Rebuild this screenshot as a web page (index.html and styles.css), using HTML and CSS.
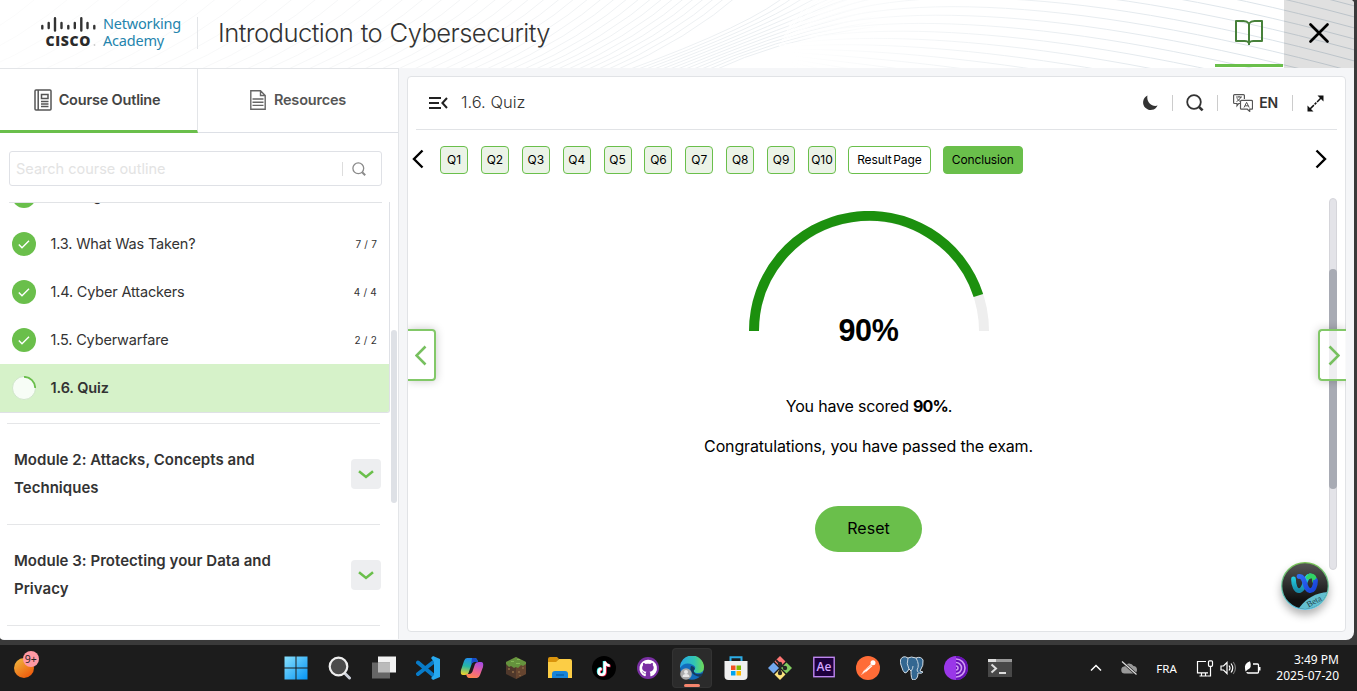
FILE: index.html
```html
<!DOCTYPE html>
<html lang="en">
<head>
<meta charset="utf-8">
<title>Introduction to Cybersecurity</title>
<link rel="stylesheet" href="styles.css">
</head>
<body>
<div class="window">
  <header class="header">
    <svg class="waves" width="1354" height="68" viewBox="0 0 1354 68">
      <defs>
        <linearGradient id="fadeA" gradientUnits="userSpaceOnUse" x1="0" y1="0" x2="880" y2="0"><stop offset="0" stop-color="#fbfbfb"/><stop offset=".5" stop-color="#f4f5f6"/><stop offset=".88" stop-color="#eaeef1"/><stop offset="1" stop-color="#fff"/></linearGradient>
        <linearGradient id="fadeB" gradientUnits="userSpaceOnUse" x1="790" y1="0" x2="1354" y2="0"><stop offset="0" stop-color="#fff"/><stop offset=".3" stop-color="#f0f3f5"/><stop offset="1" stop-color="#d5dee5"/></linearGradient>
      </defs>
      <g id="waveA" fill="none" stroke="url(#fadeA)"></g>
      <g id="waveB" fill="none" stroke="url(#fadeB)"></g>
    </svg>
    <div class="brand">
      <svg class="cisco" width="58" height="34" viewBox="40 15 58 34">
        <g stroke="#333" stroke-width="2.400" stroke-linecap="round"><path d="M42.300 26v2.400M48.700 23v5M55 18.300v12.200M61.500 23v5M68.300 26v2.400M74.800 23v5M81.300 18.300v12.200M87.500 23v5M94.300 26v2.400"/></g>
        <text x="45.5" y="46" textLength="45" class="cisco-word">CISCO</text>
        <circle cx="94.500" cy="45" r=".9" fill="#ccc"/>
      </svg>
      <div class="academy"><div>Networking</div><div>Academy</div></div>
    </div>
    <h1 class="course">Introduction to Cybersecurity</h1>
    <div class="head-book">
      <svg width="30" height="28" viewBox="0 0 30 28" fill="none" stroke="#47813a" stroke-width="2" stroke-linejoin="round"><path d="M15 4.500Q13 2 9.500 2H2v20h8.500Q14 22 15 24Q16 22 19.500 22H28V2H20.500Q17 2 15 4.500V26"/></svg>
    </div>
    <div class="head-close"><svg width="22" height="22" viewBox="0 0 22 22" stroke="#000" stroke-width="2.700" stroke-linecap="round"><path d="M2.500 2.500l17 17M19.500 2.500l-17 17"/></svg></div>
  </header>

  <div class="body">
    <aside class="sidebar">
      <nav class="tabs">
        <div class="tab tab-on">
          <svg width="18" height="22" viewBox="0 0 18 22" fill="none" stroke="#555" stroke-width="1.500"><rect x="1" y="1" width="16" height="20" rx="1"/><path d="M4.200 1v20M7.500 5.500h6.500v4h-6.500zM7 12.500h7.500M7 15h7.500M7 17.500h7.500"/></svg>
          <span>Course Outline</span>
        </div>
        <div class="tab">
          <svg width="16" height="20" viewBox="0 0 16 20" fill="none" stroke="#666" stroke-width="1.400"><path d="M.8.8h9.700l4.700 4.700v13.700H.8zM10.500.8v4.700h4.700M2.500 9h11M2.500 12.200h11M2.500 15.400h11"/></svg>
          <span>Resources</span>
        </div>
      </nav>
      <div class="search">
        <span class="ph">Search course outline</span>
        <i></i>
        <svg width="14" height="14" viewBox="0 0 14 14" fill="none" stroke="#8a8a8a" stroke-width="1.300"><circle cx="6.300" cy="6.300" r="5.400"/><path d="M10.200 10.200l3 3" stroke-width="2"/></svg>
      </div>
      <div class="outline">
        <div class="lessons">
          <div class="lesson cut"><b class="tick"></b><span>1.2. Organizational Data</span></div>
          <div class="lesson"><b class="tick"><svg width="12" height="9" viewBox="0 0 12 9"><path d="M.8 4.500l3.200 3.300L11 .8"/></svg></b><span>1.3. What Was Taken?</span><em>7 / 7</em></div>
          <div class="lesson"><b class="tick"><svg width="12" height="9" viewBox="0 0 12 9"><path d="M.8 4.500l3.200 3.300L11 .8"/></svg></b><span>1.4. Cyber Attackers</span><em>4 / 4</em></div>
          <div class="lesson"><b class="tick"><svg width="12" height="9" viewBox="0 0 12 9"><path d="M.8 4.500l3.200 3.300L11 .8"/></svg></b><span>1.5. Cyberwarfare</span><em>2 / 2</em></div>
          <div class="lesson current">
            <svg width="24" height="24" viewBox="0 0 24 24"><circle cx="12" cy="12" r="11.500" fill="#f7fdf6" stroke="#c9dfc4" stroke-width=".8"/><path d="M12 .8A11.200 11.200 0 0 1 23.200 12" fill="none" stroke="#6abf4b" stroke-width="1.700"/></svg>
            <span>1.6. Quiz</span>
          </div>
        </div>
        <div class="module"><span>Module 2: Attacks, Concepts and Techniques</span><b class="drop"><svg width="16" height="9" viewBox="0 0 16 9"><path d="M1 1.200L8 7l7-5.800"/></svg></b></div>
        <div class="module"><span>Module 3: Protecting your Data and Privacy</span><b class="drop"><svg width="16" height="9" viewBox="0 0 16 9"><path d="M1 1.200L8 7l7-5.800"/></svg></b></div>
        <div class="module last"></div>
        <div class="side-thumb"></div>
      </div>
    </aside>

    <main class="card">
      <div class="toolbar">
        <svg width="19" height="14" viewBox="0 0 19 14" fill="none" stroke="#222" stroke-width="2"><path d="M0 2h12M0 7h10M0 12h12M18 2l-4.600 5L18 12"/></svg>
        <span class="title">1.6. Quiz</span>
        <svg class="moon" width="16" height="16" viewBox="0 0 16 16"><path d="M5.500.5A7.600 7.600 0 1 0 15.600 10.600C10 12.500 4 7 5.500.5z" fill="#333"/></svg>
        <i></i>
        <svg class="find" width="18" height="18" viewBox="0 0 18 18" fill="none" stroke="#333" stroke-width="1.800"><circle cx="8" cy="8" r="6.800"/><path d="M12.800 12.800l3.800 3.600" stroke-width="2.600"/></svg>
        <i></i>
        <svg class="lang-icon" width="20" height="18" viewBox="0 0 20 18" fill="none" stroke="#555" stroke-width="1.200"><path d="M7 9.500H5.800L4 11.800V9.500H1.500Q.6 9.500.6 8.500V1.600Q.6.6 1.600.6h8.800q1 0 1 1V5M8.500 6.400h10q1 0 1 1v6.800q0 1-1 1h-1.800v2.200l-2.400-2.200H8.500q-1 0-1-1V7.400q0-1 1-1z"/><path d="M3 3h6M6 2v1M7.800 3Q7 6 3.500 7.600M4 4.200q1 2 3 3.200M11 13.500l2.600-5.200 2.600 5.200M12 11.800h3.200" stroke-width="1"/></svg>
        <strong>EN</strong>
        <i></i>
        <svg class="expand" width="17" height="17" viewBox="0 0 17 17"><path d="M3 14L14 3" stroke="#111" stroke-width="1.500" stroke-dasharray="5.500 1 2.500 1"/><path d="M10.500.5h6V6.500zM.5 10.500v6H6.500z" fill="#111"/></svg>
      </div>
      <div class="pager">
        <svg width="12" height="20" viewBox="0 0 12 20"><path d="M10.500 1.500L2 10l8.500 8.500"/></svg>
        <div class="steps">
          <a>Q1</a><a>Q2</a><a>Q3</a><a>Q4</a><a>Q5</a><a>Q6</a><a>Q7</a><a>Q8</a><a>Q9</a><a>Q10</a><a class="result">Result Page</a><a class="end">Conclusion</a>
        </div>
        <svg width="12" height="20" viewBox="0 0 12 20"><path d="M1.500 1.500L10 10l-8.500 8.500"/></svg>
      </div>
      <section class="score">
        <svg width="240" height="120" viewBox="0 0 240 120" fill="none" stroke-width="10"><path d="M5 120A115 115 0 0 1 235 120" stroke="#eee"/><path d="M5 120A115 115 0 0 1 229.400 84.460" stroke="#1c900e"/></svg>
        <div class="percent">90%</div>
        <p>You have scored <b>90%</b>.</p>
        <p>Congratulations, you have passed the exam.</p>
        <div class="reset">Reset</div>
      </section>
      <div class="track"><div class="thumb"></div></div>
      <div class="side prev"><svg width="12" height="21" viewBox="0 0 12 21"><path d="M10.500 1.500l-9 9 9 9"/></svg></div>
      <div class="side next"><svg width="12" height="21" viewBox="0 0 12 21"><path d="M1.500 1.500l9 9-9 9"/></svg></div>
      <div class="assistant">
        <svg width="48" height="48" viewBox="0 0 48 48">
          <defs>
            <linearGradient id="rim" x1="0" y1="0" x2="0" y2="1"><stop offset="0" stop-color="#77c34f"/><stop offset="1" stop-color="#58bce0"/></linearGradient>
            <linearGradient id="core" x1="0" y1="0" x2="0" y2="1"><stop offset="0" stop-color="#555"/><stop offset=".8" stop-color="#111"/></linearGradient>
            <linearGradient id="cy" x1="0" y1="0" x2="0" y2="1"><stop offset="0" stop-color="#25d6e8"/><stop offset="1" stop-color="#178aa8"/></linearGradient>
            <linearGradient id="bg" x1="0" y1="0" x2="1" y2="1"><stop offset="0" stop-color="#2f6af5"/><stop offset="1" stop-color="#1742d8"/></linearGradient>
            <clipPath id="disc"><circle cx="24" cy="24" r="23"/></clipPath>
          </defs>
          <circle cx="24" cy="24" r="24" fill="url(#rim)"/><circle cx="24" cy="24" r="22.700" fill="url(#core)"/>
          <path d="M18 46Q29 31 48 30V48H18z" fill="#63bfd0" clip-path="url(#disc)"/>
          <g fill="none" stroke-width="4.800" stroke-linecap="round"><path d="M12.500 17c0 7 2.500 12.500 6.500 11.500 6-2 4-14 10-14.500" stroke="url(#cy)"/><path d="M29 14q5-.5 4.500 5" stroke="#31d366"/><path d="M18 14.500c7-1 4.500 12.500 10.500 14 4 .5 6-4 6-10" stroke="url(#bg)"/><path d="M27 15.500q4-3.500 6 .5" stroke="#31d366" stroke-width="4"/></g>
          <text x="27.500" y="45.500" class="beta" transform="rotate(-28 27.500 45.500)">Beta</text>
        </svg>
      </div>
    </main>
  </div>
</div>

<footer class="taskbar">
  <div class="widget"><svg width="28" height="30" viewBox="0 0 28 30"><defs><linearGradient id="or" x1="0" y1="0" x2=".7" y2="1"><stop offset="0" stop-color="#efbd42"/><stop offset="1" stop-color="#ee5a0c"/></linearGradient></defs><circle cx="11" cy="18" r="10" fill="url(#or)"/><circle cx="18" cy="9" r="8" fill="#ff99a4"/><text x="11.700" y="12.800" class="count">9+</text></svg></div>
  <div class="apps">
    <div class="app"><svg viewBox="0 0 24 24"><defs><linearGradient id="win" x1="0" y1="0" x2="1" y2="1"><stop offset="0" stop-color="#88e0fd"/><stop offset="1" stop-color="#0594f5"/></linearGradient></defs><path d="M.5.500h11v11H.5zM12.500.500h11v11h-11zM.5 12.500h11v11H.5zM12.500 12.500h11v11h-11z" fill="url(#win)"/></svg></div>
    <div class="app"><svg viewBox="0 0 24 24"><path d="M16.500 17l5 5" stroke="#ccd0da" stroke-width="3" stroke-linecap="round"/><circle cx="10.500" cy="10.500" r="8.800" fill="#4b4b4b" stroke="#eee" stroke-width="2.200"/></svg></div>
    <div class="app"><svg viewBox="0 0 24 24"><path d="M6 .5h18v16H6z" fill="#f2f2f2"/><path d="M0 6.500h18v16H0z" fill="#666"/><path d="M6 6.500h12v10H6z" fill="#bbb"/></svg></div>
    <div class="app"><svg viewBox="0 0 24 24"><path d="M17.500 6L2 18M2 6.500l15.500 13" stroke="#087bc8" stroke-width="4" stroke-linecap="round"/><path d="M17 0l7 3v18l-7 3-2-2 3-3V6l-3-4z" fill="#27a8ee"/></svg></div>
    <div class="app"><svg viewBox="0 0 24 24"><defs><linearGradient id="ca" x1=".5" y1="0" x2=".3" y2="1"><stop stop-color="#228cf0"/><stop offset=".5" stop-color="#26b7a3"/><stop offset="1" stop-color="#eed32c"/></linearGradient><linearGradient id="cb" x1=".8" y1="0" x2=".4" y2="1"><stop stop-color="#a34ae8"/><stop offset=".6" stop-color="#f1658e"/><stop offset="1" stop-color="#ff8350"/></linearGradient></defs><path d="M7 2h8q2 0 3 4h-4q-2 0-3 4L8.500 17Q8 19 5 19H3q-3 0-2-5L4 5Q5 2 7 2z" fill="url(#ca)"/><path d="M12 2h3q2 0 3 4h-4q-2 0-3 3z" fill="#174cc9"/><path d="M17 22H9q-2 0-3-4h3q3 0 4-4l2-6q1-2 4-2h2q3 0 2 5l-3 8q-1 3-3 3z" fill="url(#cb)"/></svg></div>
    <div class="app"><svg viewBox="0 0 24 24"><path d="M2 6l10-5 10 5v12l-10 5L2 18z" fill="#4f382b"/><path d="M12 11l10-5v12l-10 5z" fill="#65442f"/><path d="M12 1l10 5v2l-3 2-2-1-3 3-2-1-2 1-3-2-2 1-3-3V6z" fill="#65933d"/><path d="M4 12h2v2H4zM8 15h2v2H8zM14 15h2v2h-2zM18 11h2v2h-2zM15 19h2v1h-2z" fill="#80603f"/><path d="M7 5h3v1H7zM13 3h3v1h-3zM12 7h4v1h-4z" fill="#83b955"/></svg></div>
    <div class="app"><svg viewBox="0 0 24 24"><path d="M0 3q0-2 2-2h7l2 2-3 4H0z" fill="#d9930c"/><path d="M0 6h8l3-3h11q2 0 2 2v17H0z" fill="#fccd45"/><path d="M4 22v-4q0-3 3-3h10q3 0 3 3v4z" fill="#1683d8"/><path d="M8 19h8" stroke="#0962aa" stroke-width="1.500"/></svg></div>
    <div class="app"><svg viewBox="0 0 24 24"><circle cx="12" cy="12" r="12" fill="#000"/><g fill="none" stroke-width="2.500"><path d="M12 5v10.500a3 3 0 1 1-3-3.200M12 5q1 4 5 4" stroke="#25f4ee"/><path d="M13.500 6v10.500a3 3 0 1 1-3-3.200M13.500 6q1 4 5 4" stroke="#fe2c55"/><path d="M12.700 5.500V16a3 3 0 1 1-3-3.200M12.700 5.500q1 4 5 4" stroke="#fff"/></g></svg></div>
    <div class="app"><svg viewBox="0 0 24 24"><circle cx="12" cy="12" r="11" fill="#7a2fa3"/><path d="M12 3.800a8.500 8.500 0 0 0-3.200 16.400c.7.100 1-.2 1-.6v-2c-2.400.5-3-1-3-1-1-2 0-1.200.8-.1.700 1.200 2 .8 2.300.6 0-.7.300-1 .6-1.300-5-.5-5-5-3.400-6.600-.2-.6-.2-1.500.1-2.300 1 0 2 .6 2.600 1 1.400-.3 2.900-.3 4.300 0 .7-.5 1.700-1 2.600-1 .3.800.3 1.700.1 2.300 1.700 2 1.300 6-3.300 6.600.5.400.8 1.200.8 2v2c0 .4.300.7 1 .5A8.500 8.500 0 0 0 12 3.800z" fill="#fff"/></svg></div>
    <div class="app active"><svg viewBox="0 0 24 24"><defs><linearGradient id="eg"><stop stop-color="#25a5e8"/><stop offset=".6" stop-color="#32c5b2"/><stop offset="1" stop-color="#70db55"/></linearGradient></defs><circle cx="12" cy="12" r="11.800" fill="#126cbd"/><path d="M0 12A12 12 0 0 1 24 11q0 6-6 6-5 0-4-3 3-3-1-5Q5 5 0 12z" fill="url(#eg)"/><path d="M11 10q-3 8 9 11 2-1 3-4-7 3-9-1-1-2 1-3-1-3-4-3z" fill="#15395f"/><circle cx="6" cy="18" r="5.800" fill="#aaa"/><circle cx="6" cy="16" r="2" fill="#e8e8e8"/><path d="M2.500 21q0-3 3.500-3t3.500 3z" fill="#e8e8e8"/></svg></div>
    <div class="app"><svg viewBox="0 0 24 24"><path d="M6.500 7V1.200h11V7" fill="none" stroke="#2cace5" stroke-width="2"/><path d="M.5 5h23v15q0 4-4 4h-15q-4 0-4-4z" fill="#f0f0f0"/><path d="M7 9.500h4.500V14H7z" fill="#f25022"/><path d="M12.500 9.500H17V14h-4.500z" fill="#7fba00"/><path d="M7 15h4.500v4.500H7z" fill="#00a4ef"/><path d="M12.500 15H17v4.500h-4.500z" fill="#ffb900"/></svg></div>
    <div class="app"><svg viewBox="0 0 24 24"><path d="M12 0l5.500 5.500L12 11 6.500 5.500z" fill="#ff7674"/><path d="M18.500 6.500L24 12l-5.500 5.500L13 12z" fill="#82cc60"/><path d="M12 13l5.500 5.500L12 24l-5.500-5.500z" fill="#fbe27d"/><path d="M5.500 6.500L11 12l-5.500 5.500L0 12z" fill="#72a7ee"/><path d="M8 4l4 4v9M12 8l5 4" fill="none" stroke="#252525" stroke-width="1.800"/><g fill="#252525"><circle cx="12" cy="8" r="2.200"/><circle cx="17" cy="12" r="2.200"/><circle cx="12" cy="17" r="2.200"/></g></svg></div>
    <div class="app"><svg viewBox="0 0 24 24"><rect x="1.800" y="1.300" width="20.400" height="19.400" fill="#1e003d" stroke="#be86f0" stroke-width="1.400"/><text x="4.500" y="15" textLength="15" class="ae">Ae</text></svg></div>
    <div class="app"><svg viewBox="0 0 24 24"><circle cx="12" cy="12" r="12" fill="#ff6c37"/><circle cx="17" cy="6.700" r="2.500" fill="#fff"/><path d="M15 8l1.500 2-6 5.500L5 19l3-4.500z" fill="#fff"/><path d="M8 14.500L16 9M6 18l4-2.500" stroke="#ff9a75" stroke-width=".7"/></svg></div>
    <div class="app"><svg viewBox="0 0 24 24"><path d="M3 1q-4 2-2 8 2 7 4 8 2 0 4-4l2 2q0 8 2 9 5 0 5-7 4 1 5-1l-3-1q4-6 3-11-2-4-7-2-5-2-8 0-3-2-5-1z" fill="#336791" stroke="#d3dce4" stroke-width="1"/><path d="M8 2Q6 8 9 13M16 2q4 7 1 12M11 15q2-2 2-5M17 14l1 2" fill="none" stroke="#d3dce4" stroke-width=".9"/></svg></div>
    <div class="app"><svg viewBox="0 0 24 24"><circle cx="12" cy="12" r="12" fill="#9a37e8"/><path d="M12 0a12 12 0 0 1 0 24z" fill="#6811b5"/><g fill="none" stroke="#cf9bf3" stroke-width="1.600"><path d="M12 3a9 9 0 0 1 0 18M12 6.500a5.500 5.500 0 0 1 0 11M12 10a2 2 0 0 1 0 4"/></g></svg></div>
    <div class="app"><svg viewBox="0 0 24 24"><path d="M0 3h24v18H0z" fill="#484848"/><path d="M0 3h24v3H0z" fill="#999"/><path d="M0 3h8v3H0z" fill="#ddd"/><path d="M3.500 8.500L8 12.500l-4.500 4M11 17h7" fill="none" stroke="#ddd" stroke-width="2"/></svg></div>
  </div>
  <div class="tray">
    <svg class="up" width="12" height="8" viewBox="0 0 12 8"><path d="M1 6.500l5-5 5 5" fill="none" stroke="#fff" stroke-width="1.500"/></svg>
    <svg class="cloud" width="17" height="14" viewBox="0 0 17 14"><path d="M4 12.500a3.500 3.500 0 0 1-.5-7A5 5 0 0 1 12.500 5a3.800 3.800 0 0 1 .5 7.500z" fill="#999"/><path d="M1 .5l14.500 13" stroke="#1c1c1c" stroke-width="2.600"/><path d="M1 .5l14.500 13" stroke="#ddd" stroke-width="1.200"/></svg>
    <span class="kbd">FRA</span>
    <svg class="net" width="18" height="17" viewBox="0 0 18 17" fill="none" stroke="#fff" stroke-width="1.200"><path d="M10 1.500H1.500v11.300H12M5.500 13v3M9.500 13v3M3.500 16h8"/><rect x="12.500" y=".8" width="4" height="5.500" rx="1"/><path d="M14.500 6.300V16h-3"/></svg>
    <svg class="vol" width="17" height="14" viewBox="0 0 17 14" fill="none" stroke="#fff" stroke-width="1.200"><path d="M1 5h2.500l3.500-3.500v11L3.500 9H1zM9 4.500q2 2.500 0 5M11 2.500q3.500 4.500 0 9"/><path d="M13.200 1q4.500 6 0 12" stroke="#777"/></svg>
    <svg class="bat" width="17" height="14" viewBox="0 0 17 14"><path d="M9 3h4.500q1 0 1 1v7q0 1-1 1H4q-1 0-1-1" fill="none" stroke="#fff" stroke-width="1.300"/><path d="M15 6h1.500v3.500H15z" fill="#fff"/><path d="M1 7.500Q0 2.500 6 .3 8.500 7 3.500 8.800L1.500 10.500z" fill="#fff"/></svg>
    <div class="clock">3:49 PM<br>2025-07-20</div>
  </div>
</footer>
<script src="waves.js"></script>
</body>
</html>
```
FILE: styles.css
```css
* { box-sizing: border-box; }
body { margin: 0; width: 1357px; height: 691px; overflow: hidden; background: #3a3a3a; font-family: Inter, "Liberation Sans", sans-serif; color: #333; }
svg { display: block; flex: none; }
.window { width: 1354px; height: 640px; border-radius: 0 4px 8px 4px; overflow: hidden; background: #f5f6f8; }

.header { position: relative; display: flex; align-items: center; height: 68px; background: #fff; }
.waves { position: absolute; inset: 0; }
.brand { position: relative; display: flex; align-items: center; width: 198px; height: 32px; padding-left: 40px; border-right: 1px solid #e3e5e8; margin-bottom: 2px; }
.cisco { margin-bottom: 3px; }
.cisco-word { font: 800 14px "Open Sans", sans-serif; fill: #2b2b2b; }
.academy { font: 14.5px/17px "Noto Sans", sans-serif; letter-spacing: -.2px; color: #2484ad; margin: 0 0 2px 5px; white-space: nowrap; }
.academy div { height: 17px; }
.course { position: relative; margin: 0 0 3px 20px; flex: 1; font-size: 25.6px; font-weight: 300; letter-spacing: -.56px; word-spacing: .8px; white-space: nowrap; color: #333; }
.head-book { position: relative; width: 68px; height: 67px; margin-bottom: 1px; border-bottom: 3px solid #6abf4b; display: flex; align-items: center; justify-content: center; padding-top: 2px; }
.head-close { position: relative; width: 70px; height: 68px; margin-left: 1px; background: rgba(0,0,0,.12); display: flex; align-items: center; justify-content: center; padding-bottom: 2px; }

.body { display: flex; height: 572px; }
.sidebar { width: 399px; background: #fff; border: solid #e3e5e8; border-width: 1px 1px 0 0; display: flex; flex-direction: column; height: 571px; }
.tabs { display: flex; height: 64px; }
.tab { flex: 1; display: flex; align-items: center; justify-content: center; gap: 8px; padding-bottom: 2px; border-bottom: 1px solid #dde0e6; font-size: 14.5px; font-weight: 600; color: #555; letter-spacing: -.2px; }
.tab-on { flex: 0 0 198px; border-right: 1px solid #e3e5e8; color: #444; padding-right: 3px; padding-bottom: 0; gap: 7px; border-bottom: 3px solid #6abf4b; }
.search { display: flex; align-items: center; width: 373px; height: 35px; margin: 18px 0 16px 9px; padding: 0 15px 0 6px; border: 1px solid #dfe1e6; border-radius: 3px; }
.ph { flex: 1; font-size: 14.5px; color: #e3e3e3; }
.search i { width: 1px; height: 14px; background: #ddd; margin-right: 9px; }
.outline { position: relative; flex: 1; overflow: hidden; }
.outline::before { content: ""; position: absolute; left: 9px; top: 0; width: 373px; height: 1px; background: #e1e3e6; z-index: 1; }
.lessons { width: 390px; height: 211px; border: solid #dfe1e6; border-width: 0 1px 1px 0; border-radius: 0 0 3px 0; overflow: hidden; }
.lesson { display: flex; align-items: center; height: 48px; padding: 0 12px; font-size: 14.5px; letter-spacing: -.17px; }
.lesson.cut { margin-top: -30px; }
.lesson span { flex: 1; margin-left: 14.5px; padding-bottom: 2px; }
.lesson em { font-style: normal; font-size: 10px; letter-spacing: .2px; }
.tick { display: flex; width: 24px; height: 24px; border-radius: 50%; background: #6abf4b; align-items: center; justify-content: center; }
.tick path { fill: none; stroke: #fff; stroke-width: 1.4; }
.current { background: #d6f2c9; font-weight: 600; letter-spacing: -.1px; }
.module { display: flex; align-items: center; width: 373px; height: 101px; margin-left: 7px; border-top: 1px solid #e5e6e8; padding-left: 7px; font-size: 15px; line-height: 28px; font-weight: 600; letter-spacing: .03px; }
.lessons + .module { margin-top: 10px; }
.module span { width: 280px; margin-right: auto; }
.module.last { height: 20px; }
.drop { width: 30px; height: 30px; display: flex; align-items: center; justify-content: center; background: #edeef0; border-radius: 4px; margin-right: -1px; }
.drop path { fill: none; stroke: #6abf4b; stroke-width: 2.5; }
.side-thumb { position: absolute; left: 391px; top: 128px; width: 6px; height: 173px; border-radius: 3px; background: #dee1e6; }

.card { position: relative; width: 939px; height: 556px; margin: 8px 0 0 8px; background: #fff; border: 1px solid #e1e3e6; border-radius: 4px; display: flex; flex-direction: column; }
.toolbar { display: flex; align-items: center; height: 53px; margin: 0 8px; padding: 0 12px 0 13px; border-bottom: 1px solid #e1e3e6; }
.title { margin-left: 13px; flex: 1; font-size: 16.5px; font-weight: 300; padding-bottom: 2px; }
.toolbar i { width: 1px; height: 16px; background: #ccc; }
.moon { margin-right: 14px; }
.find { margin: 0 13px; }
.lang-icon { margin: 0 6px 0 15px; }
.toolbar strong { font-size: 14px; font-weight: 600; margin-right: 14px; letter-spacing: -.2px; padding-bottom: 1px; }
.expand { margin-left: 14px; margin-right: 1px; }
.pager { display: flex; align-items: center; margin-top: 16px; height: 28px; padding: 0 18px 0 4px; }
.pager > svg { margin-bottom: 2px; }
.pager path { fill: none; stroke: #000; stroke-width: 2.4; }
.steps { display: flex; flex: 1; gap: 12.9px; margin-left: 16px; }
.steps a { width: 28px; height: 28px; display: flex; align-items: center; justify-content: center; border: 1px solid #6abf4b; border-radius: 4px; background: #ebf3e7; color: #000; font-size: 12px; padding-bottom: 1px; }
.steps .result { width: 83px; margin-left: -1px; background: #fff; letter-spacing: -.1px; word-spacing: -1.5px; white-space: nowrap; }
.steps .end { width: 80px; margin-left: -1px; background: #6abf4b; letter-spacing: -.15px; }
.score { display: flex; flex-direction: column; align-items: center; width: 922px; margin-top: 37px; color: #000; }
.percent { font: 700 30.5px/36px "Liberation Sans", sans-serif; margin: -19px 1px 0 0; letter-spacing: -.3px; }
.score p { margin: 0 1px 0 0; font-size: 16px; line-height: 40px; letter-spacing: -.15px; }
.score p b { letter-spacing: -.9px; }
.percent + p { margin: 38px 0 0 0; letter-spacing: -.2px; }
.reset { display: flex; align-items: center; justify-content: center; width: 107px; height: 46px; margin: 40px 1px 0 0; border-radius: 23px; background: #6abf4b; font-size: 16px; padding-bottom: 2px; }
.track { position: absolute; left: 921px; top: 121px; width: 8px; height: 372px; border-radius: 4px; border: 1px solid #d5d5da; background: #e3e3e8; }
.thumb { width: 8px; height: 220px; margin: 70px 0 0 -1px; border-radius: 4px; background: #a8abb4; }
.side { position: absolute; top: 252px; width: 28px; height: 52px; border: 2px solid #82c868; background: rgba(255,255,255,.8); box-shadow: 0 0 10px rgba(0,0,0,.22); display: flex; align-items: center; justify-content: center; }
.side path { fill: none; stroke: #77c05f; stroke-width: 2.6; }
.prev { left: 0; border-left: 0; border-radius: 0 4px 4px 0; clip-path: inset(-12px -12px -12px 0); }
.next { right: -1px; border-right: 0; border-radius: 4px 0 0 4px; clip-path: inset(-12px 0 -12px -12px); }
.next svg { margin-left: 2px; }
.assistant { position: absolute; left: 873px; top: 485px; width: 48px; height: 48px; border-radius: 50%; box-shadow: 0 5px 8px rgba(0,0,0,.3); }
.beta { font: 8.5px "Liberation Serif", serif; fill: #24454d; }

.taskbar { display: flex; height: 46px; margin-top: 5px; background: #1c1c1c; color: #fff; font-family: "Noto Sans", sans-serif; }
.widget { width: 276px; padding: 5px 0 0 13px; }
.count { font: 10.5px "Noto Sans", sans-serif; fill: #222; }
.apps { display: flex; gap: 4px; align-items: center; }
.app { position: relative; width: 40px; height: 40px; display: flex; align-items: center; justify-content: center; border-radius: 4px; }
.app svg { width: 24px; height: 24px; }
.active { background: #2b2b2b; outline: 1px solid #333; outline-offset: -1px; }
.active::after { content: ""; position: absolute; left: 12px; bottom: 1px; width: 16px; height: 3px; border-radius: 2px; background: #f6856d; }
.ae { font: 600 12px "Open Sans", sans-serif; fill: #d5a5ff; }
.tray { flex: 1; display: flex; align-items: center; justify-content: flex-end; padding-right: 18px; }
.up { margin-right: 1px; }
.cloud { margin-left: 18px; }
.kbd { margin-left: 18px; width: 22px; font-size: 11.5px; }
.net { margin-left: 18px; }
.vol { margin-left: 6px; }
.bat { margin-left: 7px; }
.clock { margin-left: 15px; font-size: 12px; line-height: 16px; text-align: right; white-space: nowrap; }
```
FILE: waves.js
```js
// Decorative contour lines behind the header.
function addPath(group, d) {
  const p = document.createElementNS("http://www.w3.org/2000/svg", "path");
  p.setAttribute("d", d);
  document.getElementById(group).appendChild(p);
}
let x = -120;
for (let step = 34; x < 620; step = Math.max(10, step * 0.965)) {
  addPath("waveA", `M${x} 72Q${x + 75} 40 ${x + 130} -8`);
  x += step;
}
// The last lines bend together near the right-hand crest before fanning out.
for (let i = 0; i < 12; i++) {
  addPath("waveA", `M${x + i * 8} 72Q${755 + i * 2} ${24 + i * 1.5} ${790 + i * 6} ${-8 + i * 3.4}T900 ${-30 + i * 4.5}`);
}
for (let i = 0; i < 26; i++) {
  const y = -90 + i * 11;
  addPath("waveB", `M${790 - i} ${40 + y * 0.18}C${880} ${y * 0.9} ${1080} ${y + 8} 1380 ${y + 92}`);
}
```
